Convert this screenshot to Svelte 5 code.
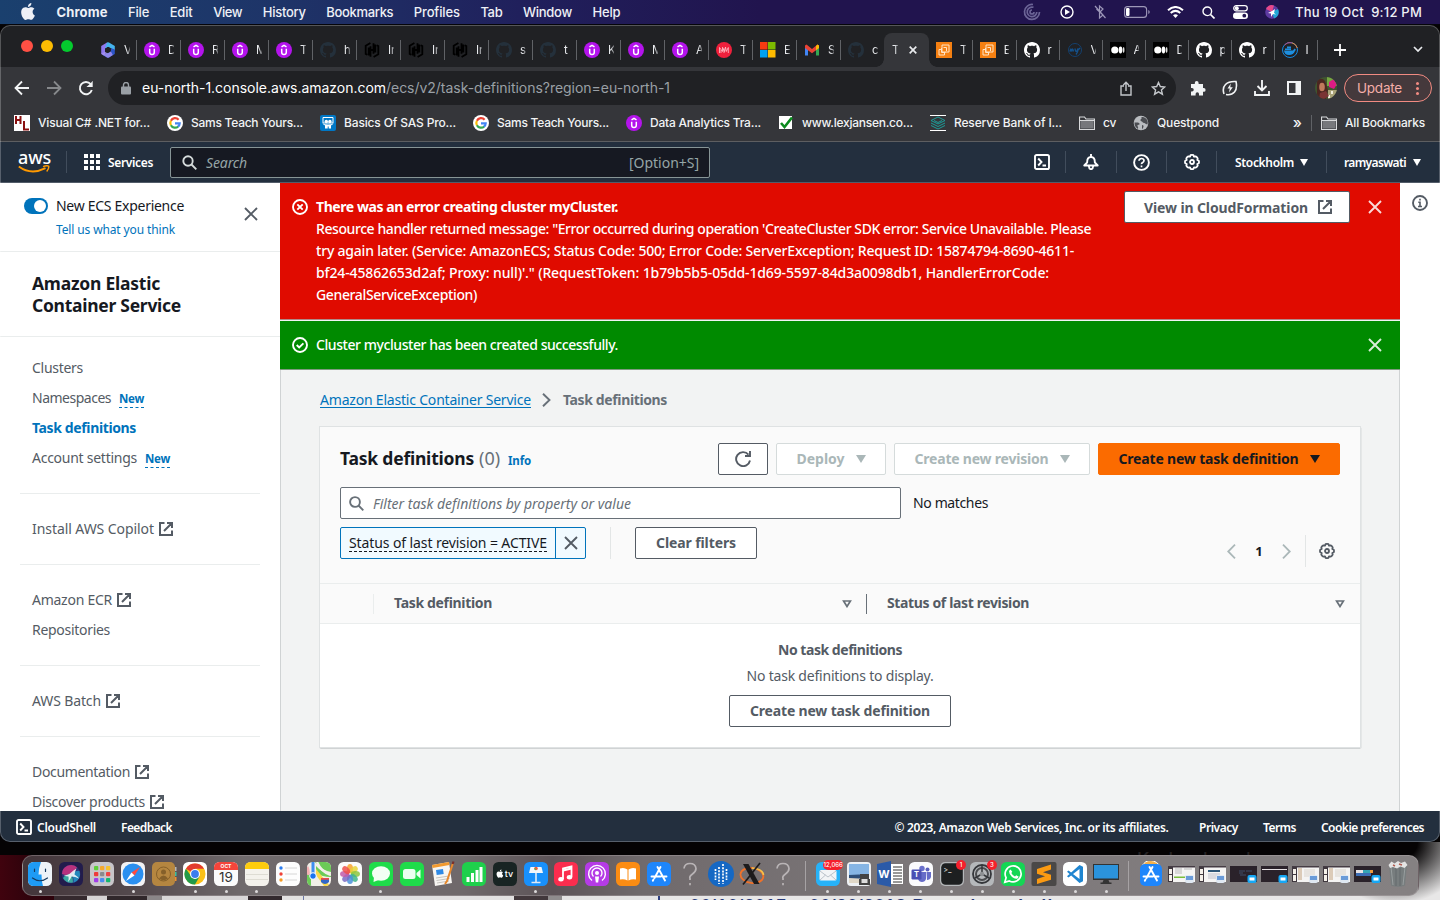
<script>
  // Spreads a label over the given width by adjusting its tracking.
  function fit(node, width) {
    const chars = node.textContent.length;
    const natural = node.getBoundingClientRect().width;
    node.style.letterSpacing = `${(width - natural) / chars}px`;
  }

  const menus = [
    ['File', 21], ['Edit', 23], ['View', 29], ['History', 43], ['Bookmarks', 67],
    ['Profiles', 46], ['Tab', 22], ['Window', 49], ['Help', 28]
  ];

  const tabsBefore = [
    ['office', 'V'], ['udemy', 'D'], ['udemy', 'R'], ['udemy', 'M'], ['udemy', 'T'],
    ['githubDark', 'h'], ['hashi', 'In'], ['hashi', 'In'], ['hashi', 'In'],
    ['githubDark', 's'], ['githubDark', 't'], ['udemy', 'K'], ['udemy', 'M'], ['udemy', 'A'],
    ['mred', 'T'], ['microsoft', 'E'], ['gmail', 'S'], ['githubDark', 'c']
  ];
  const tabsAfter = [
    ['ec2', 'T'], ['ec2', 'E'], ['github', 'r'], ['mysql', 'V'], ['medium', 'A'],
    ['medium', 'D'], ['github', 'p'], ['github', 'r'], ['docker', 'I']
  ];

  const bookmarks = [
    ['hl', 'Visual C# .NET for...', 112], ['google', 'Sams Teach Yours...', 112],
    ['slideshare', 'Basics Of SAS Pro...', 112], ['google', 'Sams Teach Yours...', 112],
    ['udemy', 'Data Analytics Tra...', 111], ['check', 'www.lexjansen.co...', 111],
    ['layers', 'Reserve Bank of I...', 108], ['folder', 'cv', 13], ['globe', 'Questpond', 62]
  ];

  const sections = [
    [
      { t: 'Clusters', w: 51 },
      { t: 'Namespaces', w: 79, isNew: true },
      { t: 'Task definitions', w: 104, active: true },
      { t: 'Account settings', w: 105, isNew: true }
    ],
    [{ t: 'Install AWS Copilot', w: 122, ext: true }],
    [{ t: 'Amazon ECR', w: 80, ext: true }, { t: 'Repositories', w: 78 }],
    [{ t: 'AWS Batch', w: 69, ext: true }],
    [{ t: 'Documentation', w: 98, ext: true }, { t: 'Discover products', w: 113, ext: true }]
  ];

  const errorLines = [
    ["Resource handler returned message: \"Error occurred during operation 'CreateCluster SDK error: Service Unavailable. Please", 775],
    ['try again later. (Service: AmazonECS; Status Code: 500; Error Code: ServerException; Request ID: 15874794-8690-4611-', 758],
    ["bf24-45862653d2af; Proxy: null)'.\" (RequestToken: 1b79b5b5-05dd-1d69-5597-84d3a0098db1, HandlerErrorCode:", 733],
    ['GeneralServiceException)', 161]
  ];

  const dock = [
    ['finder', 1], ['siri'], ['launchpad'], ['safari', 1], ['contacts'], ['chrome', 1],
    ['calendar', 1], ['notes', 1], ['reminders'], ['maps'], ['photos'], ['messages', 1],
    ['facetime'], ['pages'], ['numbers'], ['tv'], ['keynote', 1], ['music'], ['podcasts'],
    ['books'], ['appstore'], ['unknown'], ['dots'], ['xquartz'], ['unknown'], ['sep'],
    ['mail', 1], ['preview', 1], ['word', 1], ['teams', 1], ['terminal', 1], ['settings', 1],
    ['whatsapp', 1], ['sublime', 1], ['vscode', 1], ['monitor', 1], ['sep'], ['appstore2'],
    ['win1'], ['win2'], ['win3'], ['win4'], ['win5'], ['win6'], ['win7'], ['trash']
  ];
  const petals = ['#f7a32b', '#e8d33a', '#8cc63e', '#3fb58a', '#4a90d9', '#7b6bc4', '#c25ba8', '#ee4f4a'];
  const gridColors = ['#5fcf3a', '#f5a82e', '#f5c22e', '#ee3a3a', '#8a8a8e', '#ee4444', '#a23be8', '#4a8df0', '#15b86e'];
  const gh = 'M8 0C3.58 0 0 3.58 0 8c0 3.54 2.29 6.53 5.47 7.59.4.07.55-.17.55-.38 0-.19-.01-.82-.01-1.49-2.01.37-2.53-.49-2.69-.94-.09-.23-.48-.94-.82-1.13-.28-.15-.68-.52-.01-.53.63-.01 1.08.58 1.23.82.72 1.21 1.87.87 2.33.66.07-.52.28-.87.51-1.07-1.78-.2-3.64-.89-3.64-3.95 0-.87.31-1.59.82-2.15-.08-.2-.36-1.02.08-2.12 0 0 .67-.21 2.2.82.64-.18 1.32-.27 2-.27s1.36.09 2 .27c1.53-1.04 2.2-.82 2.2-.82.44 1.1.16 1.92.08 2.12.51.56.82 1.27.82 2.15 0 3.07-1.87 3.75-3.65 3.95.29.25.54.73.54 1.48 0 1.07-.01 1.93-.01 2.2 0 .21.15.46.55.38A8.01 8.01 0 0 0 16 8c0-4.42-3.58-8-8-8z';
  const apple = 'M12.152 6.896c-.948 0-2.415-1.078-3.96-1.04-2.04.027-3.91 1.183-4.961 3.014-2.117 3.675-.546 9.103 1.519 12.09 1.013 1.454 2.208 3.09 3.792 3.039 1.52-.065 2.09-.987 3.935-.987 1.831 0 2.35.987 3.96.948 1.637-.026 2.676-1.48 3.676-2.948 1.156-1.688 1.636-3.325 1.662-3.415-.039-.013-3.182-1.221-3.22-4.857-.026-3.04 2.48-4.494 2.597-4.559-1.429-2.09-3.623-2.324-4.39-2.376-2-.156-3.675 1.09-4.61 1.09zM15.53 3.83c.843-1.012 1.4-2.427 1.245-3.83-1.207.052-2.662.805-3.532 1.818-.78.896-1.454 2.338-1.273 3.714 1.338.104 2.715-.688 3.559-1.701';
</script>

{#snippet ext()}
  <svg class="ext" width="14" height="14" viewBox="0 0 14 14" fill="none" stroke="currentColor" stroke-width="2"><path d="M5.500 1H1v12h12V8.500M8 1h5v5M13 1L5 9" /></svg>
{/snippet}

{#snippet close(size)}
  <svg width={size} height={size} viewBox="0 0 14 14" fill="none" stroke="currentColor" stroke-width="1.900"><path d="M1 1l12 12M13 1L1 13" /></svg>
{/snippet}

{#snippet gear()}
  <svg width="16" height="16" viewBox="0 0 16 16" fill="none" stroke="currentColor" stroke-width="1.800"><path stroke-linejoin="round" d="M6.600 1.200Q8 .6 9.400 1.200L10 2.600l1.600-.3q1.400.8 2.100 2.100L13.300 6l1.500.7q.4 1.300 0 2.600l-1.500.7.4 1.600q-.7 1.400-2.100 2.100l-1.600-.3-.6 1.400q-1.400.6-2.800 0L6 13.400l-1.600.3q-1.400-.7-2.100-2.100l.4-1.600-1.500-.7q-.4-1.300 0-2.600L2.700 6l-.4-1.600q.7-1.300 2.100-2.100L6 2.600z" /><circle cx="8" cy="8" r="2" /></svg>
{/snippet}

{#snippet shell()}
  <svg width="16" height="16" viewBox="0 0 16 16" fill="none" stroke="currentColor" stroke-width="1.900"><rect x="1" y="1" width="14" height="14" rx="1.600" /><path d="M4.200 4.500L7.500 8l-3.300 3.500M8.500 11.500h3.500" /></svg>
{/snippet}

{#snippet caret()}
  <svg width="10" height="8" viewBox="0 0 10 8" fill="currentColor"><path d="M0 0h10L5 8z" /></svg>
{/snippet}

{#snippet fav(name)}
  <svg class="fav" width="16" height="16" viewBox="0 0 16 16">
    {#if name === 'office'}
      <path d="M7 .6L1.200 4v8L5 14.200V6.500l5-3z" fill="#8f78ee" /><path d="M7 .6q1-.6 2 0L14.800 4v4.500L10.500 6 8 4.700l-3 1.800z" fill="#45b4ee" /><path d="M14.800 7.500V12L9 15.400q-1 .6-2 0l-3.800-2.200L10.800 9V6z" fill="#2d55c8" /><path d="M1.200 11.800L5 9.700l2.500 1.600 3.300-2 2 3.800L9 15.400q-1 .6-2 0z" fill="#a893f4" opacity=".8" /><path d="M5.300 6.500L8 5l2.700 1.500v3L8 11 5.300 9.500z" fill="#202124" />
    {:else if name === 'udemy'}
      <circle cx="8" cy="8" r="8" fill="#b413ec" /><path d="M5.500 4.800L8 3.300l2.500 1.500M5.700 6.800v3.400a2.300 2.300 0 0 0 4.600 0V6.800" fill="none" stroke="#fff" stroke-width="1.500" />
    {:else if name === 'github'}
      <path d={gh} fill="#fff" />
    {:else if name === 'githubDark'}
      <path d={gh} fill="#24303b" />
    {:else if name === 'hashi'}
      <g fill="none" stroke="#000" stroke-width="1.800"><path d="M6.400 1L1.700 3.700v8.200l1.600.9M4.700 13.500V5.400M6.500 4.200v10.600M6.500 8h3M9.500 1.200v10.600M11.300 2.500v8.100M9.600 15l4.700-2.700V4.100l-1.600-.9" /></g>
    {:else if name === 'mred'}
      <circle cx="8" cy="8" r="8" fill="#f0203c" /><path d="M3.500 11V5.500l3 4V5.300l2 4.200 1-4.500.8 4.500 2-4V11M5 11V8M8 11V6.500" fill="none" stroke="#ffc5cb" stroke-width=".8" />
    {:else if name === 'microsoft'}
      <path d="M0 0h7.500v7.500H0z" fill="#f53a11" /><path d="M8 0h7.500v7.500H8z" fill="#7cbb00" /><path d="M0 8h7.500v7.500H0z" fill="#00a1f1" /><path d="M8 8h7.500v7.500H8z" fill="#ffbb00" />
    {:else if name === 'gmail'}
      <path d="M1 4.500V13.500h3V7z" fill="#4285f4" /><path d="M12 7v6.500h3V4.500z" fill="#34a853" /><path d="M1 3.500l1.500-1L8 7l5.500-4.500 1.500 1V6l-7 5.200L1 6z" fill="#ea4335" /><path d="M12 4l1.500-1.500L15 3.500V6l-3 2.200z" fill="#fbbc04" />
    {:else if name === 'ec2'}
      <path d="M0 0h16v16H0z" fill="#f58012" /><path d="M6 3h7v7H6z" fill="none" stroke="#ffe3c4" /><path d="M7.500 5.500h3V9M8.500 10.500v2.500H3V7.500h2.500M5.500 6v4.500h4" fill="none" stroke="#ffe3c4" />
    {:else if name === 'mysql'}
      <circle cx="8" cy="8" r="6.500" fill="none" stroke="#14406e" stroke-width="1" /><path d="M3 9.500q1-5 1.500 0 1-5 2 0M8 6.500q.5 4 2 2.500l1-2.500q0 4-2 6M11 8l2-2" fill="none" stroke="#14508a" stroke-width="1.400" />
    {:else if name === 'medium'}
      <path d="M0 0h16v16H0z" fill="#000" /><circle cx="4.800" cy="8" r="3.600" fill="#fff" /><ellipse cx="10.500" cy="8" rx="1.800" ry="3.400" fill="#fff" /><ellipse cx="13.600" cy="8" rx=".9" ry="3.100" fill="#ddd" />
    {:else if name === 'docker'}
      <circle cx="8" cy="8" r="7.500" fill="none" stroke="#1789e0" stroke-width="1" /><path d="M2.500 3A7.500 7.500 0 0 1 10 .8" fill="none" stroke="#c04a78" /><path d="M10 .8A7.500 7.500 0 0 1 15.300 6" fill="none" stroke="#f0883c" /><path d="M2 8.500h9l1.500-2 1.500 1.200-1 1.300q-1.500 4-6 4T2 8.500zM3 6.500h6v1.600H3zM5 4.600h4v1.600H5z" fill="#1d8fe0" />
    {:else if name === 'hl'}
      <path d="M0 0h16v16H0z" fill="#fff" /><path d="M2 1v8M6.500 1v8M2 5h4.500M10 6v8.500h5" fill="none" stroke="#8b1010" stroke-width="2" />
    {:else if name === 'google'}
      <circle cx="8" cy="8" r="8" fill="#fff" /><g fill="none" stroke-width="2.200"><path d="M11.600 4.700A4.700 4.700 0 0 0 3.900 5.800" stroke="#ea4335" /><path d="M3.900 5.700a4.800 4.800 0 0 0 0 4.600" stroke="#fbbc05" /><path d="M3.900 10.200a4.700 4.700 0 0 0 7.300 1.300" stroke="#34a853" /><path d="M11 11.700A4.500 4.500 0 0 0 12.700 8.300H8" stroke="#4285f4" /></g>
    {:else if name === 'slideshare'}
      <rect width="16" height="16" rx="2" fill="#0077c5" /><path d="M3 2.500h10v5.500H3z" fill="none" stroke="#fff" /><circle cx="6.300" cy="6.500" r="1.700" fill="#fff" /><circle cx="9.900" cy="6.500" r="1.700" fill="#fff" /><path d="M2 8.500q6 2 12 0l-3 2v3H8.700v-2h-1v2H5v-3z" fill="#fff" />
    {:else if name === 'check'}
      <path d="M1 1h13v13H1z" fill="#fff" /><path d="M3 8l3.500 4L14 2.500" fill="none" stroke="#0b8a1e" stroke-width="2.600" />
    {:else if name === 'layers'}
      <path d="M0 .5h16M0 15.500h16" stroke="#fff" /><g fill="none" stroke="#1d9c98" stroke-width="1"><path d="M1 5.500L8 2l7 3.500L8 9z" /><path d="M1 8l7 3.500L15 8M1 10.500L8 14l7-3.500M4 5.500l4 2 4-2" /></g>
    {:else if name === 'folder'}
      <path d="M.5 2h5l1.500 2h8.500v10.500H.5z" fill="#35363a" stroke="#d8d9db" stroke-width="1.200" /><path d="M1.500 6h13v7.500h-13z" fill="#77787c" /><path d="M.5 5.500h15" stroke="#d8d9db" />
    {:else if name === 'globe'}
      <circle cx="8" cy="8" r="7.300" fill="#b9bcc0" /><path d="M1.500 7.500q2 .2 3.500 0 2 .5 1.500 2-2.500 0-2 1.500 1 1.500.5 3-3.500-2-3.500-6.500zM8.500 2Q9 4 7.500 4.500q-.5 2 1.500 2 1 1.500 2.500 1.500 1.500 1 2.800 1.500.8-2 .1-4-2-4-5.900-3.500zM9 10q2 0 1.500 2L9 14.500z" fill="#4b4d52" />
    {/if}
  </svg>
{/snippet}

{#snippet tab(t)}
  <div class="tab">{@render fav(t[0])}<span class="tab-label">{t[1]}</span></div>
{/snippet}

{#snippet miniBadge(kind)}
  {#if kind === 'p'}
    <rect x="17" y="13" width="9" height="8" rx="2" fill="#dfe8f2" /><path d="M18 14h7v4h-7z" fill="#6a9bd8" />
  {:else}
    <rect x="17.500" y="13" width="9" height="8" rx="2" fill="#16a8f5" /><path d="M19.500 15.500h5v3h-5z" fill="#fff" />
  {/if}
{/snippet}

{#snippet app(name)}
  {#if name.startsWith('win')}
    {@const n = +name[3]}
    <svg width="27" height="24" viewBox="0 0 27 24">
      {#if n === 1 || n === 2 || n === 5 || n === 6}
        <path d="M0 4h27v16H0z" fill="#f5f4f3" /><path d="M0 4h27v1.500H0z" fill="#453c44" /><path d="M0 5h5v15H0z" fill="#40383f" /><path d="M1 7h3v5H1zM1 13h3v6H1z" fill="#f5f1ea" />
        {#if n === 1}<path d="M6 14.500h19v1.500H6z" fill="#79bd3c" /><path d="M7 7h7M7 9h7M16 7h8M7 11h7" stroke="#bbb" />{/if}
        {#if n === 2}<path d="M9 8h12v2H9z" fill="#2f5778" /><path d="M9 12h12M9 14h12M9 16h8" stroke="#aab" stroke-width=".7" />{/if}
        {#if n >= 5}<path d="M6 6h4v12H6z" fill="#dccbb8" /><path d="M12 8h11M12 10h11M12 12h11M12 14h8" stroke="#d0c6bb" stroke-width=".7" />{/if}
        {@render miniBadge('p')}
      {:else}
        <path d="M0 4h27v16H0z" fill="#2a222a" />
        {#if n === 3}<path d="M9 9h6M9 11h4M10 13h6M16 9h6" stroke="#3f4c66" />{/if}
        {#if n === 4}<path d="M1 7.500h25" stroke="#e8e3e6" stroke-width="1" />{/if}
        {#if n === 7}<path d="M2 8h7v3H2z" fill="#e8e3e6" /><path d="M9 8h9v3H9z" fill="#36a5b5" /><path d="M16 8h3v3h-3z" fill="#ee9a3c" /><path d="M2 11h15v3H2z" fill="#3d6db4" />{/if}
        {@render miniBadge('m')}
      {/if}
    </svg>
  {:else}
    <svg width="26" height="26" viewBox="-1 -1 26 26">
      {#if name === 'finder'}
        <rect width="24" height="24" rx="5.500" fill="#eef3f8" /><path d="M5.500 0H13q-2.500 6-2.500 12.500h3q0 7 1.500 11.500H5.500A5.500 5.500 0 0 1 0 18.500v-13A5.500 5.500 0 0 1 5.500 0z" fill="#1e9bf5" /><path d="M6.500 7v2.500M17.500 7v2.500M4.500 16q7.500 5.500 15 0" fill="none" stroke="#173a5e" stroke-width="1.200" stroke-linecap="round" />
      {:else if name === 'siri'}
        <rect width="24" height="24" rx="5.500" fill="#221c4c" /><circle cx="12" cy="12" r="9.300" fill="#2c2f72" /><path d="M3 12a9 9 0 0 1 15-6.700Q16 10 12 12T3 12z" fill="#b8327e" /><path d="M12 12q5-4 8.500-3a9 9 0 0 1-6 11.800Q15 15 12 12z" fill="#2487bb" /><path d="M12 12q-5 0-8 4a9 9 0 0 0 10 4.500Q14 15 12 12z" fill="#3aa8a0" /><path d="M4.500 13.500q5-.5 7-2.500 3-3 6-4.500-2 4-2 6 3 2 4.500 4-4-2-7.500-2-1 3-3.500 5.500 1-4 .5-5.500-2 0-5-1z" fill="#fff" opacity=".85" />
      {:else if name === 'launchpad'}
        <rect width="24" height="24" rx="5.500" fill="#c8c6ca" />{#each gridColors as c, i}<rect x={4 + (i % 3) * 6} y={4 + Math.floor(i / 3) * 6} width="4.300" height="4.300" rx="1" fill={c} />{/each}
      {:else if name === 'safari'}
        <rect width="24" height="24" rx="5.500" fill="#f2f2f4" /><circle cx="12" cy="12" r="10.500" fill="#2a8ff0" /><path d="M19 5l-5.500 8.500-3-3z" fill="#ff4b3e" /><path d="M5 19l5.500-8.500 3 3z" fill="#fff" />
      {:else if name === 'contacts'}
        <rect width="23" height="24" rx="5" fill="#b58640" /><path d="M23 5h1.500v4H23z" fill="#b5b5b5" /><path d="M23 10h1.500v4H23z" fill="#3bc0a0" /><path d="M23 15h1.500v4H23z" fill="#f09030" /><circle cx="11.500" cy="12" r="7" fill="none" stroke="#85602a" /><circle cx="11.500" cy="10" r="2.500" fill="#85602a" /><path d="M7 16.500q4.500-6 9 0-4.500 3.500-9 0z" fill="#85602a" />
      {:else if name === 'chrome'}
        <rect width="24" height="24" rx="5.500" fill="#fff" /><circle cx="12" cy="12" r="10.500" fill="#fbc116" /><path d="M12 12L2.900 6.700A10.500 10.500 0 0 1 21.100 6.700H12z" fill="#e33b2e" /><path d="M2.900 6.700A10.500 10.500 0 0 0 12 22.500l4.600-8L12 12l-4 2z" fill="#229a48" /><circle cx="12" cy="12" r="5" fill="#fff" /><circle cx="12" cy="12" r="3.900" fill="#3b7ded" />
      {:else if name === 'calendar'}
        <rect width="24" height="24" rx="5.500" fill="#fbfbfb" /><path d="M0 8V5.500A5.500 5.500 0 0 1 5.500 0h13A5.500 5.500 0 0 1 24 5.500V8z" fill="#f4453b" /><text x="12" y="6" text-anchor="middle" font-size="5" font-weight="700" fill="#fff">OCT</text><text x="12" y="19.700" text-anchor="middle" font-size="13.500" fill="#333">19</text>
      {:else if name === 'notes'}
        <rect width="24" height="24" rx="5.500" fill="#f4f2ec" /><path d="M0 7V5.500A5.500 5.500 0 0 1 5.500 0h13A5.500 5.500 0 0 1 24 5.500V7z" fill="#fdcc0e" /><path d="M1 12.500h22M1 17.500h22" stroke="#d8d5cd" stroke-width=".8" />
      {:else if name === 'reminders'}
        <rect width="24" height="24" rx="5.500" fill="#fdfdfd" /><circle cx="5" cy="6" r="1.700" fill="#2c7df0" /><circle cx="5" cy="12" r="1.700" fill="#ef4136" /><circle cx="5" cy="18" r="1.700" fill="#f59a23" /><path d="M9 6h12M9 12h12M9 18h12" stroke="#ccc" stroke-width=".8" />
      {:else if name === 'maps'}
        <clipPath id="mapclip"><rect width="24" height="24" rx="5.500" /></clipPath>
        <g clip-path="url(#mapclip)"><path d="M0 0h24v24H0z" fill="#f2efe8" /><path d="M8 0h16v10Q14 8 8 0z" fill="#6ccb57" /><path d="M0 12h4v12H0zM9 11q6 4 15 4v-3Q14 10 9 4z" fill="#6ccb57" /><path d="M10 0q4 10 14 13" fill="none" stroke="#f2efe8" stroke-width="2.500" /><path d="M9 7l14 17h-6L9 13z" fill="#fbd84a" /><path d="M0 5q2 4 1 8" stroke="#f5b0b4" stroke-width="3" fill="none" /><path d="M6 0v14" stroke="#3e8ef0" stroke-width="3" /><circle cx="6" cy="14" r="3.300" fill="#1c74f0" stroke="#fff" /><path d="M14 17h8v3q-4 4-8 0z" fill="#3267c8" /><path d="M14 16h8v1.800h-8z" fill="#e94b4b" /></g>
      {:else if name === 'photos'}
        <rect width="24" height="24" rx="5.500" fill="#fbfbfb" />{#each petals as c, i}<ellipse cx="12" cy="6.600" rx="3" ry="4.600" fill={c} opacity=".85" transform="rotate({i * 45} 12 12)" />{/each}
      {:else if name === 'messages'}
        <rect width="24" height="24" rx="5.500" fill="#1fdc4a" /><ellipse cx="12" cy="11.500" rx="9" ry="7.300" fill="#f2fff4" /><path d="M5 15l-.5 5 5-2z" fill="#f2fff4" />
      {:else if name === 'facetime'}
        <rect width="24" height="24" rx="5.500" fill="#1fdc4a" /><rect x="3" y="7" width="12.500" height="10" rx="2.500" fill="#eafff0" /><path d="M16.500 11l4-3.500v9l-4-3.500z" fill="#eafff0" />
      {:else if name === 'pages'}
        <path d="M1 3l17-3 3 21-17 3z" fill="#f8f6f2" /><path d="M1 3l17-3 .5 3-17 3z" fill="#f29a2e" /><path d="M5 8l7-1 .7 5-7 1z" fill="#2f8ae6" /><path d="M5 16l13-2M5.500 18.500l13-2M6 21l12-2" stroke="#b9b6b0" stroke-width=".8" /><path d="M22 1l-6 18-2 3" fill="none" stroke="#e8892c" stroke-width="2" /><path d="M22.500 -.5l-.8 2.500" stroke="#7a2e2a" stroke-width="2.200" />
      {:else if name === 'numbers'}
        <rect width="24" height="24" rx="5.500" fill="#1fd04c" /><path d="M6 20v-5M10.500 20v-9M15 20V8M19 20V5" stroke="#fff" stroke-width="3" />
      {:else if name === 'tv'}
        <rect width="24" height="24" rx="5.500" fill="#182423" /><path d={apple} fill="#fff" transform="translate(2.800 7.500) scale(.34)" /><text x="16" y="15.300" text-anchor="middle" font-size="9" font-weight="500" fill="#fff">tv</text>
      {:else if name === 'keynote'}
        <rect width="24" height="24" rx="5.500" fill="#1890fb" /><path d="M6.500 5h11l1.500 6H5z" fill="#f2f6fb" /><path d="M12 11v9M7.500 20.500h9" stroke="#dfeaf7" stroke-width="1.600" /><circle cx="12" cy="6.500" r="1.800" fill="#ee5a3c" /><path d="M12 6.500V8.300a1.800 1.800 0 0 1-1.800-1.800z" fill="#4cc04c" />
      {:else if name === 'music'}
        <rect width="24" height="24" rx="5.500" fill="#fb2d4e" /><path d="M9 17V6.500l8.500-2v10.500" fill="none" stroke="#fff" stroke-width="1.800" /><path d="M9 8.500l8.500-2" stroke="#fff" stroke-width="2" /><ellipse cx="7" cy="17.300" rx="2.700" ry="2.200" fill="#fff" /><ellipse cx="15.500" cy="15.300" rx="2.700" ry="2.200" fill="#fff" />
      {:else if name === 'podcasts'}
        <rect width="24" height="24" rx="5.500" fill="#b53be6" /><g fill="none" stroke="#fff" stroke-width="1.400"><path d="M7 18.500a8.400 8.400 0 1 1 10 0" /><path d="M8.500 14.500a5 5 0 1 1 7 0" /></g><circle cx="12" cy="11" r="2" fill="#fff" /><path d="M10 14.500h4l-.8 6h-2.400z" fill="#fff" />
      {:else if name === 'books'}
        <rect width="24" height="24" rx="5.500" fill="#fb8c13" /><path d="M4 6.500q4-1.500 7.500 1v11q-3.500-2-7.500-1zM20 6.500q-4-1.500-7.500 1v11q3.500-2 7.500-1z" fill="#fff" />
      {:else if name === 'appstore' || name === 'appstore2'}
        {#if name === 'appstore2'}<path d="M2.500 5Q6-2 12-1.500T21.500 5z" fill="#f3b04c" stroke="#fff" /><rect x="1" y="2" width="22" height="22" rx="5" fill="#1e86fb" />{:else}<rect width="24" height="24" rx="5.500" fill="#1e86fb" />{/if}
        <path d="M13.500 5L7.500 16M10.500 5l7.500 13.500M4.500 14.500h9.500M17 14.500h2.500M6.500 17.500l-.7 1.200" stroke="#fff" stroke-width="1.900" stroke-linecap="round" />
      {:else if name === 'unknown'}
        <path d="M6 6.500Q6.500 1.500 12 1.500t6 5q0 3-3.500 5.500T12 16.500v1.500M12 21v2.200" fill="none" stroke="#b9b4b6" stroke-width="1.700" />
      {:else if name === 'dots'}
        <circle cx="12" cy="12" r="13" fill="#1568c4" /><path d="M6.500 7v11M10 5v17M14 2v20M17.500 7v11" stroke="#fff" stroke-width="1.700" stroke-dasharray="2 1.200" />
      {:else if name === 'xquartz'}
        <ellipse cx="12" cy="13.500" rx="11.500" ry="7.500" fill="none" stroke="#f0722a" stroke-width="1.800" transform="rotate(8 12 13)" /><path d="M12 6q11 1 11.500 7" fill="none" stroke="#f5c24b" stroke-width="1.600" /><path d="M3 2h5.500l11 20H14z" fill="#1d1b1c" /><path d="M20 1L3 22.500" stroke="#1d1b1c" stroke-width="1.700" />
      {:else if name === 'mail'}
        <rect width="24" height="24" rx="5.500" fill="#26b2f8" /><rect x="3.500" y="8" width="17" height="10.500" rx="1.500" fill="#f2f4f6" /><path d="M4 9l8 6 8-6M4 18l5.500-5M20 18l-5.500-5" fill="none" stroke="#b4bcc5" stroke-width=".9" />
      {:else if name === 'preview'}
        <rect width="24" height="24" rx="4" fill="#eef1f4" /><path d="M2 2h20v19H2z" fill="#86b5e4" /><path d="M2 13q10-1 20 0v8H2z" fill="#2f4f78" /><path d="M2 16l20 1v4H2z" fill="#e0d8c8" /><path d="M13 12h9v5h1v6H12v-6h1z" fill="#444" /><path d="M14.500 17h6v4h-6z" fill="#ddd" />
      {:else if name === 'word'}
        <path d="M11 2h15v20H11z" fill="#fff" /><path d="M15 5h9M15 8h9M15 11h9M15 14h9M15 17h9M15 20h9" stroke="#333" stroke-width="1" /><path d="M-1 2l14-3v26l-14-3z" fill="#2a5aa8" /><text x="6" y="16" text-anchor="middle" font-size="11" font-weight="700" fill="#fff">W</text>
      {:else if name === 'teams'}
        <rect width="24" height="24" rx="5.500" fill="#fbfbfd" /><circle cx="13" cy="6.500" r="2.700" fill="#6a70cc" /><circle cx="18.500" cy="7.500" r="2" fill="#5a60bc" /><path d="M9 10h8v7q-1 3-4 3t-4-3zM17.500 10H22v5q-1 3-4 3z" fill="#666cc8" /><rect x="2.500" y="7.500" width="10" height="10" rx="1.200" fill="#4b50b4" /><text x="7.500" y="15" text-anchor="middle" font-size="7.500" font-weight="700" fill="#fff">T</text>
      {:else if name === 'terminal'}
        <rect width="24" height="24" rx="5" fill="#b4b7b9" /><rect x="1.200" y="1.200" width="21.600" height="21.600" rx="4.300" fill="#1d1f20" /><text x="3.500" y="9.500" font-size="7" fill="#fff">&gt;_</text>
      {:else if name === 'settings'}
        <rect width="24" height="24" rx="5.500" fill="#b5b8bb" /><circle cx="12" cy="12" r="9" fill="none" stroke="#34363a" stroke-width="1.800" /><circle cx="12" cy="12" r="6" fill="none" stroke="#4b4d50" stroke-width="2" /><path d="M12 12V4M12 12l7 4M12 12l-7 4" stroke="#34363a" stroke-width="1.500" /><circle cx="12" cy="12" r="2.200" fill="#8d9093" />
      {:else if name === 'whatsapp'}
        <rect width="24" height="24" rx="5.500" fill="#14d654" /><path d="M3.800 20.200l1.300-4.500a8 8 0 1 1 3.200 3.200z" fill="none" stroke="#fff" stroke-width="1.700" /><path d="M9.500 7.500L8 9q0 3.500 3 6t5.500 1.500l1.300-1.800-2.600-1.500-1.200 1.200Q11.500 13.500 10.300 11l1-1.200z" fill="#fff" />
      {:else if name === 'sublime'}
        <rect x="-.5" width="25" height="24" rx="2" fill="#4a4847" /><path d="M5 7l14-4.500v5l-8 2.700 8 2.500v5L5 22v-5l8-2.700-8-2.500z" fill="#fb9a12" />
      {:else if name === 'vscode'}
        <rect width="24" height="24" rx="5.500" fill="#fff" /><path d="M16.500 3L20 4.700v14.600L16.500 21 4 9.800l1.500-1.400 11 8.600V7L5.500 15.600 4 14.200z" fill="#1f85d0" />
      {:else if name === 'monitor'}
        <path d="M-1 2h26v16H-1z" fill="#333" /><path d="M0 3h24v13.500H0z" fill="#2b93dc" /><path d="M9.500 18h5l1 2.500h2V22h-11v-1.500h2z" fill="#333" />
      {:else if name === 'trash'}
        <path d="M3 2h18l-2 21.500q-7 2.500-14 0z" fill="#777d7e" /><path d="M5 5l2 18M19 5l-2 18" stroke="#989e9f" /><path d="M10 6v18M14 6v18" stroke="#656b6c" /><path d="M2.500 3l3-3.500 3 2L12-1l3 2 4-1.500L21.500 3l-3 3-4-1.500L11 6.500 7 5 4 6z" fill="#e4e4e4" /><path d="M7 3l2 1M13 2l3 1" stroke="#b25c50" stroke-width="1.500" />
      {/if}
    </svg>
    {#if name === 'mail'}<b class="badge wide">12,066</b>{/if}
    {#if name === 'terminal'}<b class="badge">1</b>{/if}
    {#if name === 'settings'}<b class="badge">3</b>{/if}
  {/if}
{/snippet}

<div class="desktop">
  <header class="menubar">
    <svg class="apple" width="14" height="17" viewBox="2 0 20 24"><path d={apple} fill="#eef0f6" /></svg>
    <b use:fit={51}>Chrome</b>
    {#each menus as m}<span use:fit={m[1]}>{m[0]}</span>{/each}
    <div class="status">
      <svg width="18" height="18" viewBox="0 0 18 18" fill="none" stroke="#6b6496" stroke-width="1.700"><path d="M10 1.500A7.500 7.500 0 1 0 16.500 9M10.500 4.300A4.800 4.800 0 1 0 13.800 9M9 7a2 2 0 1 0 2 2" /></svg>
      <svg width="14" height="14" viewBox="0 0 14 14"><circle cx="7" cy="7" r="6" fill="none" stroke="#fff" stroke-width="1.400" /><path d="M5 4l5 3-5 3z" fill="#fff" /></svg>
      <svg width="12" height="14" viewBox="0 0 12 14" fill="none" stroke="#9c96b8" stroke-width="1.200"><path d="M2.500 4l6.500 6-3.500 3V1L9 4 6.500 6.500M1 1l10.500 12" /></svg>
      <svg width="26" height="12" viewBox="0 0 26 12"><rect x=".6" y=".6" width="22" height="10.800" rx="3" fill="none" stroke="#9e98b8" stroke-width="1.100" /><path d="M24.300 4v4q1.400-.5 1.400-2t-1.400-2z" fill="#9e98b8" /><rect x="2" y="2" width="3.500" height="8" rx="1.200" fill="#fff" /></svg>
      <svg width="17" height="12" viewBox="0 0 17 12" fill="none" stroke="#fff" stroke-width="2"><path d="M1 4.200q7.500-6.400 15 0M3.700 7q4.800-4.200 9.600 0" /><path d="M8.500 12L6 9.300q2.500-2 5 0z" fill="#fff" stroke="none" /></svg>
      <svg width="13" height="13" viewBox="0 0 13 13" fill="none" stroke="#fff" stroke-width="1.400"><circle cx="5.300" cy="5.300" r="4.300" /><path d="M8.500 8.500l4 4" stroke-width="1.700" /></svg>
      <svg width="15" height="14" viewBox="0 0 15 14"><rect x=".7" y=".7" width="13.600" height="5.200" rx="2.600" fill="none" stroke="#fff" stroke-width="1.200" /><circle cx="3.800" cy="3.300" r="2" fill="#fff" /><rect y="7.500" width="15" height="6.500" rx="3.200" fill="#fff" /><circle cx="11.300" cy="10.700" r="1.900" fill="#21154e" /></svg>
      <svg width="14" height="14" viewBox="0 0 14 14"><circle cx="7" cy="7" r="6.800" fill="#5e3ba2" /><path d="M7 7L1 4a6.800 6.800 0 0 1 8-3.500z" fill="#e8488a" /><path d="M7 7l6-3a6.800 6.800 0 0 1-4 9.500z" fill="#21a7d6" /><path d="M3 8l4-2 3-2-1 4 2 1.500-3-.5-2 3 0-3.500z" fill="#fff" /></svg>
      <span class="clock" use:fit={127}>Thu 19 Oct&nbsp; 9:12 PM</span>
    </div>
  </header>

  <div class="window">
    <div class="tabs">
      <div class="lights"><i></i><i></i><i></i></div>
      {#each tabsBefore as t}{@render tab(t)}{/each}
      <div class="active-tab"><span class="tab-label">T</span><svg width="8" height="8" viewBox="0 0 8 8"><path d="M.7.7l6.600 6.600M7.300.7L.7 7.300" stroke="#e8eaed" stroke-width="1.700" /></svg></div>
      <div class="tabs late">{#each tabsAfter as t}{@render tab(t)}{/each}</div>
      <svg class="plus" width="12" height="12" viewBox="0 0 12 12"><path d="M6 0v12M0 6h12" stroke="#fff" stroke-width="1.800" /></svg>
      <svg class="chev" width="10" height="7" viewBox="0 0 10 7"><path d="M1 1l4 4 4-4" fill="none" stroke="#e8eaed" stroke-width="1.700" /></svg>
    </div>

    <div class="toolbar">
      <div class="nav-icons">
        <svg width="16" height="16" viewBox="0 0 16 16" fill="none" stroke="#f1f3f4" stroke-width="1.800"><path d="M15 8H2M8 1.500L1.500 8 8 14.500" /></svg>
        <svg width="16" height="16" viewBox="0 0 16 16" fill="none" stroke="#86888b" stroke-width="1.800"><path d="M1 8h13M8 1.500L14.500 8 8 14.500" /></svg>
        <svg width="16" height="16" viewBox="0 0 16 16" fill="none" stroke="#f1f3f4" stroke-width="1.900"><path d="M13.800 10A6.100 6.100 0 1 1 12.700 4.200" /><path d="M14.700.8v6.300H8.400l2.300-2.200 2-1.600z" fill="#f1f3f4" stroke="none" /></svg>
      </div>
      <div class="omnibox">
        <svg width="10" height="13" viewBox="0 0 10 13"><rect y="4.500" width="10" height="8" rx="1" fill="#9aa0a6" /><path d="M2.500 5V3a2.500 2.500 0 0 1 5 0v2" fill="none" stroke="#9aa0a6" stroke-width="1.400" /></svg>
        <span class="host" use:fit={244}>eu-north-1.console.aws.amazon.com</span><span class="path" use:fit={284}>/ecs/v2/task-definitions?region=eu-north-1</span>
        <svg class="share" width="12" height="15" viewBox="0 0 12 15" fill="none" stroke="#c4c7cb" stroke-width="1.400"><path d="M4 5H1v9h10V5H8M6 10V1.500M3.300 4L6 1.300 8.700 4" /></svg>
        <svg width="15" height="15" viewBox="0 0 15 15" fill="none" stroke="#c4c7cb" stroke-width="1.400"><path d="M7.500 1.500l1.800 4 4.400.5-3.300 2.900 1 4.300-3.900-2.300-3.900 2.300 1-4.300L1.300 6l4.400-.5z" /></svg>
      </div>
      <div class="tools">
        <svg width="16" height="16" viewBox="0 0 16 16"><path d="M1 4h3.800V3a1.900 1.900 0 0 1 3.800 0v1H13v4h.7a1.900 1.900 0 0 1 0 3.800H13V15.500H9V14a1.700 1.700 0 0 0-3.400 0v1.500H1v-4h1a1.700 1.700 0 0 0 0-3.500H1z" fill="#f1f3f4" /></svg>
        <svg width="16" height="16" viewBox="0 0 16 16"><path d="M2 14q-2-6 1.500-9.500T14 1.500q1.500 7-1.500 10.500T4 14.500" fill="none" stroke="#f1f3f4" stroke-width="1.600" /><path d="M8.800 3.500L5.500 8.500h2.200L7 12.500l3.800-5.300H8.300z" fill="#f1f3f4" /></svg>
        <svg width="16" height="16" viewBox="0 0 16 16" fill="none" stroke="#f1f3f4" stroke-width="1.900"><path d="M8 0v9.500M3.500 6L8 10.500 12.500 6M1 11v4h14v-4" /></svg>
        <svg width="14" height="14" viewBox="0 0 14 14"><path d="M1 1h12v12H1z" fill="none" stroke="#f1f3f4" stroke-width="2" /><path d="M8.500 1H13v12H8.500z" fill="#f1f3f4" /></svg>
        <svg class="avatar" width="22" height="22" viewBox="0 0 22 22"><clipPath id="av"><circle cx="11" cy="11" r="11" /></clipPath><g clip-path="url(#av)"><path d="M0 0h22v22H0z" fill="#40552f" /><path d="M12 0h10v9H12z" fill="#76a642" /><path d="M14 5l5-3 3 5-3 5-5-2z" fill="#dd1b84" /><path d="M13 13h9v9h-9z" fill="#a8a278" /><path d="M16 14h2v3h-2zM13 18h2v3h-2z" fill="#f2efe0" /><path d="M2 3q5-3 8 1l3 9-2 9H2z" fill="#4b2620" /><ellipse cx="7" cy="10" rx="2.800" ry="4.300" fill="#c07a5c" /><path d="M5 16l6-2 3 5-5 3H4z" fill="#7a3434" /></g></svg>
      </div>
      <div class="update"><span use:fit={45}>Update</span><i></i></div>
    </div>

    <div class="bookmarks">
      {#each bookmarks as b}<div class="bm">{@render fav(b[0])}<span use:fit={b[2]}>{b[1]}</span></div>{/each}
      <div class="bm-end"><span class="more">»</span><i></i>{@render fav('folder')}<span use:fit={80}>All Bookmarks</span></div>
    </div>

    <nav class="aws">
      <div class="logo">
        <b use:fit={29.5}>aws</b>
        <svg width="32" height="9" viewBox="0 0 32 9"><path d="M.8 1.500Q13 10.500 27.500 3.200" fill="none" stroke="#ff9900" stroke-width="1.900" /><path d="M25 1.600q4-1.600 5.700-.4.600 2.400-2 5.300" fill="none" stroke="#ff9900" stroke-width="1.400" /></svg>
      </div>
      <i class="vr"></i>
      <svg class="grid" width="16" height="16" viewBox="0 0 16 16" fill="#fff"><path d="M0 0h4v4H0zM6 0h4v4H6zM12 0h4v4h-4zM0 6h4v4H0zM6 6h4v4H6zM12 6h4v4h-4zM0 12h4v4H0zM6 12h4v4H6zM12 12h4v4h-4z" /></svg>
      <span class="services" use:fit={45}>Services</span>
      <div class="aws-search">
        <svg width="15" height="15" viewBox="0 0 15 15" fill="none" stroke="#d5dbdb" stroke-width="1.900"><circle cx="6" cy="6" r="4.700" /><path d="M9.500 9.500l4.800 4.800" /></svg>
        <em use:fit={41}>Search</em><span use:fit={70}>[Option+S]</span>
      </div>
      <div class="aws-right">
        <div class="cell" style:width="48px">{@render shell()}</div>
        <div class="cell" style:width="51px"><svg width="16" height="16" viewBox="0 0 16 16" fill="none" stroke="#fff" stroke-width="1.900"><path d="M1.300 11.500h13.400L11.800 8.300Q12 3 8 3T4.200 8.300zM8 0v3M5.800 12q.3 3.200 2.200 3.200t2.200-3.200" stroke-linejoin="round" /></svg></div>
        <div class="cell" style:width="50px"><svg width="17" height="17" viewBox="0 0 17 17" fill="none" stroke="#fff" stroke-width="1.900"><circle cx="8.500" cy="8.500" r="7.400" /><path d="M6 6.800q.2-2.300 2.500-2.300T11 6.600q0 1.200-1.300 1.900T8.500 10.200M8.500 11.500v1.700" stroke-width="1.700" /></svg></div>
        <div class="cell" style:width="50px">{@render gear()}</div>
        <div class="cell" style:width="110px"><span use:fit={59}>Stockholm</span><svg width="8" height="7" viewBox="0 0 8 7" fill="#fff"><path d="M0 0h8L4 7z" /></svg></div>
        <div class="cell last" style:width="113px"><span use:fit={62}>ramyaswati</span><svg width="8" height="7" viewBox="0 0 8 7" fill="#fff"><path d="M0 0h8L4 7z" /></svg></div>
      </div>
    </nav>

    <div class="body">
      <aside>
        <div class="exp">
          <div class="toggle"></div>
          <div class="exp-text"><span use:fit={128}>New ECS Experience</span><a href="#top" use:fit={119}>Tell us what you think</a></div>
          {@render close(14)}
        </div>
        <h2><span use:fit={128}>Amazon Elastic</span><span use:fit={149}>Container Service</span></h2>
        <div class="links">
          {#each sections as s, i}
            {#if i}<hr />{/if}
            {#each s as l}
              <div class="link" class:active={l.active}>
                <span use:fit={l.w}>{l.t}</span>
                {#if l.isNew}<b class="new"><span use:fit={25}>New</span></b>{/if}
                {#if l.ext}{@render ext()}{/if}
              </div>
            {/each}
          {/each}
        </div>
      </aside>

      <main>
        <section class="flash error">
          <svg class="st" width="16" height="16" viewBox="0 0 16 16" fill="none" stroke="#fff" stroke-width="1.900"><circle cx="8" cy="8" r="7" /><path d="M5.300 5.300l5.400 5.400M10.700 5.300l-5.400 5.400" /></svg>
          <div class="msg"><b use:fit={302}>There was an error creating cluster myCluster.</b>{#each errorLines as l}<span use:fit={l[1]}>{l[0]}</span>{/each}</div>
          <button class="btn cf"><span use:fit={164}>View in CloudFormation</span>{@render ext()}</button>
          <div class="dismiss">{@render close(14)}</div>
        </section>
        <section class="flash ok">
          <svg class="st" width="16" height="16" viewBox="0 0 16 16" fill="none" stroke="#fff" stroke-width="1.900"><circle cx="8" cy="8" r="7" /><path d="M4.700 8l2.500 2.400 4.200-4" /></svg>
          <div class="msg"><span use:fit={302}>Cluster mycluster has been created successfully.</span></div>
          <div class="dismiss">{@render close(14)}</div>
        </section>

        <div class="content">
          <div class="crumbs">
            <a href="#ecs" use:fit={211}>Amazon Elastic Container Service</a>
            <svg width="9" height="14" viewBox="0 0 9 14"><path d="M1 .7L7.500 7 1 13.300" fill="none" stroke="#687078" stroke-width="1.900" /></svg>
            <b use:fit={104}>Task definitions</b>
          </div>

          <div class="card">
            <div class="card-head">
              <div class="title-row">
                <h1 use:fit={134}>Task definitions</h1><span class="count" use:fit={21}>(0)</span><b class="info" use:fit={23}>Info</b>
                <button class="btn refresh" aria-label="Refresh"><svg width="16" height="16" viewBox="0 0 16 16" fill="none" stroke="currentColor" stroke-width="1.900"><path d="M15 9.500A7 7 0 1 1 13.500 3.600M10 5h5V0" /></svg></button>
                <button class="btn off deploy"><span use:fit={48}>Deploy</span>{@render caret()}</button>
                <button class="btn off revision"><span use:fit={134}>Create new revision</span>{@render caret()}</button>
                <button class="btn primary"><span use:fit={180}>Create new task definition</span>{@render caret()}</button>
              </div>
              <div class="filter-row">
                <div class="filter"><svg width="15" height="15" viewBox="0 0 15 15" fill="none" stroke="#687078" stroke-width="1.900"><circle cx="6" cy="6" r="4.900" /><path d="M9.500 9.500l4.800 4.800" /></svg><em use:fit={258}>Filter task definitions by property or value</em></div>
                <span class="matches" use:fit={75}>No matches</span>
              </div>
              <div class="token-row">
                <div class="token"><div class="token-text"><span use:fit={198}>Status of last revision = ACTIVE</span></div><div class="token-x">{@render close(14)}</div></div>
                <i class="sep"></i>
                <button class="btn"><span use:fit={80}>Clear filters</span></button>
                <div class="pager">
                  <svg width="9" height="15" viewBox="0 0 9 15"><path d="M8 .7L1.200 7.500 8 14.300" fill="none" stroke="#aab7b8" stroke-width="1.800" /></svg>
                  <b>1</b>
                  <svg width="9" height="15" viewBox="0 0 9 15"><path d="M1 .7l6.800 6.800L1 14.300" fill="none" stroke="#aab7b8" stroke-width="1.800" /></svg>
                  <i></i>
                  {@render gear()}
                </div>
              </div>
            </div>
            <div class="thead">
              <div class="sel"></div>
              <div class="th first"><b use:fit={98}>Task definition</b><svg width="10" height="8" viewBox="0 0 10 8"><path d="M1.600 1h6.800L5 6.500z" fill="none" stroke="#687078" stroke-width="1.700" /></svg></div>
              <div class="th"><b use:fit={142}>Status of last revision</b><svg width="10" height="8" viewBox="0 0 10 8"><path d="M1.600 1h6.800L5 6.500z" fill="none" stroke="#687078" stroke-width="1.700" /></svg></div>
            </div>
            <div class="empty">
              <b use:fit={124}>No task definitions</b>
              <span use:fit={187}>No task definitions to display.</span>
              <button class="btn"><span use:fit={180}>Create new task definition</span></button>
            </div>
          </div>
        </div>
      </main>

      <div class="help"><svg width="16" height="16" viewBox="0 0 16 16" fill="none" stroke="#545b64" stroke-width="1.900"><circle cx="8" cy="8" r="7" /><path d="M8 3.800v1.700M6.300 7.300H8v4.200M6 11.500h4" stroke-width="1.600" /></svg></div>
    </div>

    <footer>
      {@render shell()}
      <span use:fit={59}>CloudShell</span>
      <span class="fb" use:fit={51}>Feedback</span>
      <span class="copy" use:fit={274}>© 2023, Amazon Web Services, Inc. or its affiliates.</span>
      <span use:fit={39}>Privacy</span>
      <span use:fit={33}>Terms</span>
      <span use:fit={103}>Cookie preferences</span>
    </footer>
  </div>

  <div class="paper"><span class="board" use:fit={113}>Kanban board</span><span class="dates" use:fit={374}>06/10/2017 – 06/20/2018 Bangalore, India</span></div>

  <div class="dock">
    {#each dock as d}
      {#if d[0] === 'sep'}<i class="dsep"></i>
      {:else}<div class="dapp">{@render app(d[0])}{#if d[1]}<i class="run"></i>{/if}</div>{/if}
    {/each}
  </div>
</div>

<style>
  :global(body) { margin: 0; overflow: hidden; }
  .desktop {
    position: relative; width: 1440px; height: 900px; overflow: hidden; display: flex; flex-direction: column;
    font-family: Inter, "Noto Sans", sans-serif; background: #050304;
  }
  .desktop span, .desktop b, .desktop em, .desktop a, h1 { white-space: nowrap; display: inline-block; flex: none; }
  svg { flex: none; display: block; }
  i { flex: none; }

  .menubar {
    height: 25px; box-sizing: border-box; display: flex; align-items: center; gap: 20.550px; padding-left: 21px;
    font-size: 13px; font-weight: 500; color: #eef0f6; border-bottom: 1px solid #05050a;
    background: linear-gradient(90deg, #1a406e 0, #1e3468 280px, #20205c 520px, #21144e 760px);
  }
  .apple { margin: -2px 1px 0 0; }
  .status { margin-left: auto; display: flex; align-items: center; padding-right: 18px; }
  .status svg:nth-child(1) { margin-right: 19px; }
  .status svg:nth-child(2) { margin-right: 20px; }
  .status svg:nth-child(3) { margin-right: 18px; }
  .status svg:nth-child(4) { margin-right: 17.500px; }
  .status svg:nth-child(5) { margin-right: 18px; }
  .status svg:nth-child(6) { margin-right: 18px; }
  .status svg:nth-child(7) { margin-right: 17px; }
  .status svg:nth-child(8) { margin-right: 16px; }
  .clock { margin-top: -1px; }

  .window {
    position: relative; height: 817px; flex: none; border-radius: 10px; overflow: hidden; background: #35363a;
    display: flex; flex-direction: column; z-index: 2;
  }
  .window::after { content: ""; position: absolute; inset: 0; border-radius: 10px; box-shadow: inset 0 0 0 1px rgba(255, 255, 255, .24); pointer-events: none; }

  .tabs { height: 42px; background: #202124; display: flex; align-items: center; flex: none; }
  .lights { display: flex; gap: 8px; width: 72px; padding-left: 21px; }
  .lights i { width: 12px; height: 12px; border-radius: 50%; background: #ff5044; }
  .lights i:nth-child(2) { background: #fdbc02; }
  .lights i:nth-child(3) { background: #04cb2e; }
  .tab { width: 44px; height: 20px; margin-top: 7px; box-sizing: border-box; padding-left: 7px; display: flex; align-items: center; border-right: 1px solid #606266; flex: none; }
  .tab:nth-of-type(19) { border-right-color: transparent; }
  .tab-label { margin-left: 8px; width: 5.500px; overflow: hidden; font-size: 11.500px; line-height: 16px; color: #e8eaed; -webkit-mask-image: linear-gradient(90deg, #000 50%, rgba(0, 0, 0, .35)); mask-image: linear-gradient(90deg, #000 50%, rgba(0, 0, 0, .35)); }
  .active-tab { width: 45px; margin-left: -1px; height: 34px; align-self: flex-end; background: #35363a; border-radius: 8px 8px 0 0; display: flex; align-items: center; flex: none; position: relative; }
  .active-tab::before, .active-tab::after { content: ""; position: absolute; bottom: 0; width: 8px; height: 8px; }
  .active-tab::before { left: -8px; background: radial-gradient(circle at 0 0, transparent 7.500px, #35363a 8px); }
  .active-tab::after { right: -8px; background: radial-gradient(circle at 100% 0, transparent 7.500px, #35363a 8px); }
  .active-tab svg { margin-left: 11.500px; }
  .late .tab { width: 43px; }
  .late .tab:first-child, .late .tab:nth-child(2) { width: 43.800px; }
  .plus { margin: 7px 0 0 16px; }
  .chev { margin: 7px 17px 0 auto; }

  .toolbar { height: 38px; padding-top: 4px; box-sizing: border-box; display: flex; align-items: center; flex: none; }
  .nav-icons { width: 94px; padding-left: 14px; display: flex; gap: 16px; }
  .omnibox { width: 1068px; height: 34px; border-radius: 17px; background: #202124; display: flex; align-items: center; box-sizing: border-box; padding: 0 10px 0 13px; font-size: 14px; }
  .host { color: #fff; margin: -2px 0 0 11px; }
  .path { color: #9aa0a6; margin-top: -2px; }
  .share { margin: 0 19px 0 auto; }
  .tools { display: flex; align-items: center; gap: 16px; padding-left: 14px; }
  .tools svg:nth-child(4) { margin-left: 1px; }
  .avatar { margin-left: -2px; }
  .update { margin-left: 7px; width: 88px; height: 28px; box-sizing: border-box; border: 1px solid #f28b82; border-radius: 14px; background: #45393c; color: #f6aea9; font-size: 13.500px; display: flex; align-items: center; padding-left: 12px; }
  .update i { width: 3px; height: 3px; border-radius: 50%; background: #f28b82; box-shadow: 0 -5px #f28b82, 0 5px #f28b82; margin-left: 14px; }

  .bookmarks { height: 37px; box-sizing: border-box; border-bottom: 1px solid #5d5e61; display: flex; align-items: center; padding: 0 15px 1px 14px; gap: 17px; color: #f1f3f4; font-size: 12px; font-weight: 500; flex: none; }
  .bm, .bm-end { display: flex; align-items: center; gap: 8px; }
  .bm-end { margin-left: auto; }
  .more { font-size: 15px; line-height: 12px; }
  .bm-end i { width: 1px; height: 16px; background: #606266; margin: 0 1px; }

  .aws, .body, footer { font-family: "Noto Sans", "Open Sans", sans-serif; }
  .aws { height: 41px; box-sizing: border-box; border-bottom: 1px solid #525c69; background: #232f3e; color: #fff; display: flex; align-items: center; flex: none; }
  .logo { width: 48px; padding-left: 18px; height: 26px; }
  .desktop .logo b { font-size: 18px; line-height: 16px; font-weight: 500; height: 16px; display: block; width: 30px; }
  .logo svg { margin-top: 0; }
  .vr { width: 1px; height: 22px; background: #414d5c; }
  .grid { margin-left: 17px; }
  .services { margin-left: 8px; font-size: 12px; font-weight: 600; }
  .aws-search { width: 540px; height: 31px; margin-left: 17px; box-sizing: border-box; border: 1px solid #879596; border-radius: 2px; background: #161922; display: flex; align-items: center; padding: 0 10px 0 10.500px; font-size: 14px; color: #95a5a6; }
  .aws-search em { margin-left: 9.500px; }
  .aws-search span { margin-left: auto; }
  .aws-right { margin-left: auto; display: flex; align-items: center; }
  .cell { height: 22px; box-sizing: border-box; border-right: 1px solid #414d5c; display: flex; align-items: center; justify-content: center; font-size: 12px; font-weight: 600; gap: 6px; }
  .cell.last { border: 0; justify-content: flex-start; padding-left: 17px; gap: 7px; }

  .body { height: 628px; display: flex; flex: none; background: #fff; font-size: 14px; color: #16191f; overflow: hidden; }
  aside { width: 280px; box-sizing: border-box; flex: none; }
  .exp { height: 69px; box-sizing: border-box; border-bottom: 1px solid #eaeded; display: flex; padding: 12px 22px 0 24px; color: #545b64; }
  .toggle { width: 24px; height: 16px; border-radius: 8px; background: #0073bb; margin-top: 3px; flex: none; }
  .toggle::after { content: ""; display: block; width: 12px; height: 12px; border-radius: 50%; background: #fff; transform: translate(10px, 2px); }
  .exp-text { margin-left: 8px; display: flex; flex-direction: column; align-items: flex-start; flex: 1; }
  .exp-text span { color: #16191f; line-height: 22px; }
  .exp-text a { color: #0073bb; font-size: 12px; line-height: 22px; text-decoration: none; margin-top: 2px; }
  .exp svg { margin-top: 12px; }
  h2 { margin: 0; height: 85px; box-sizing: border-box; border-bottom: 1px solid #eaeded; padding: 20px 0 0 32px; font-size: 17.500px; line-height: 22px; display: flex; flex-direction: column; align-items: flex-start; font-weight: 700; }
  .links { padding: 16px 20px 0; }
  hr { border: 0; height: 1px; background: #eaeded; margin: 20px 0; }
  .link { height: 30px; display: flex; align-items: center; padding-left: 12px; color: #545b64; }
  .link > span { margin-top: -2px; }
  .link.active { color: #0073bb; font-weight: 700; }
  .new { margin-left: 8px; font-size: 11.500px; color: #0073bb; line-height: 15px; border-bottom: 1px dashed #0073bb; margin-top: 3px; }
  .new span { transform: translateY(-1px); }
  .ext { margin-left: 5px; }

  main { width: 1120px; box-sizing: border-box; flex: none; display: flex; flex-direction: column; background: #f2f3f3; }
  .flash { color: #fff; display: flex; align-items: flex-start; box-sizing: border-box; flex: none; padding-left: 12px; }
  .error { height: 137px; background: #e00b00; padding-top: 8px; border-bottom: 1px solid #b08a88; }
  .ok { height: 49px; background: #008a00; padding-top: 8px; margin-top: 1px; border-bottom: 1px solid #7f9a80; }
  .st { margin-top: 8px; }
  .msg { margin-left: 8px; margin-top: 5px; width: 808px; display: flex; flex-direction: column; align-items: flex-start; line-height: 22px; font-weight: 500; }
  .ok .msg { width: 1052px; }
  .dismiss { margin: 9px 0 0 18px; opacity: .85; }
  .ok .dismiss { margin-left: 0; }
  .btn { font: 700 14px "Noto Sans", "Open Sans", sans-serif; height: 32px; box-sizing: border-box; border: 1px solid #545b64; border-radius: 2px; background: #fff; color: #545b64; padding: 0 20px; display: flex; align-items: center; justify-content: center; flex: none; }
  .btn span { margin-top: -2px; }
  .btn svg:not(:first-child) { margin-left: 11px; }
  .cf { width: 226px; padding: 0 16px 0 19px; justify-content: flex-start; }
  .btn.cf span { margin-top: 0; }
  .btn.cf :global(.ext:not(:first-child)) { margin-left: 10px; }
  .content { flex: 1; border-left: 1px solid #d0d3d4; border-right: 1px solid #d0d3d4; padding: 19px 38px 0 39px; }
  .crumbs { display: flex; align-items: center; height: 22px; }
  .crumbs a { color: #0073bb; text-decoration: underline; text-underline-offset: 2px; margin-top: -1px; }
  .crumbs svg { margin: 0 12px 0 11px; }
  .crumbs b { color: #687078; margin-top: -1px; }
  .card { width: 1040px; height: 320px; margin-top: 16px; background: #fff; box-sizing: border-box; box-shadow: 0 0 0 1px #dfe2e3, 0 1px 1px 0 #6b7275, 1px 1px 1px rgba(0, 28, 36, .3); display: flex; flex-direction: column; }
  .card-head { height: 157px; box-sizing: border-box; background: #fafafa; padding: 16px 20px 0; display: flex; flex-direction: column; border-bottom: 1px solid #eaeded; }
  .title-row { display: flex; height: 32px; align-items: center; gap: 8px; }
  h1 { font-size: 17.500px; margin: -2px 0 0; font-weight: 700; }
  .count { font-size: 18px; color: #687078; margin: -2px 0 0 -3px; }
  .info { font-size: 11.500px; color: #0073bb; margin-top: 3px; }
  .refresh { margin-left: auto; width: 50px; padding: 0; }
  .off { color: #aab7b8; border-color: #d5dbdb; }
  .deploy { width: 110px; padding: 0; }
  .revision { width: 196px; padding: 0; }
  .primary { width: 242px; padding: 0; background: #fb6b00; border-color: #fb6b00; color: #16191f; }
  .filter-row { display: flex; align-items: center; margin-top: 12px; gap: 12px; }
  .filter { width: 561px; height: 32px; box-sizing: border-box; border: 1px solid #687078; border-radius: 2px; background: #fff; display: flex; align-items: center; padding-left: 7.500px; color: #687078; }
  .filter em { margin-left: 9.500px; }
  .matches { margin-top: -1px; }
  .token-row { display: flex; align-items: center; margin-top: 8px; height: 32px; }
  .token { display: flex; width: 246px; height: 32px; box-sizing: border-box; border: 1px solid #0073bb; border-radius: 2px; background: #f1faff; }
  .token-text { width: 215px; box-sizing: border-box; border-right: 1px solid #0073bb; padding: 5px 0 0 8px; }
  .token-text span { line-height: 20px; border-bottom: 1px dashed #16191f; height: 18px; }
  .token-x { flex: 1; display: flex; align-items: center; justify-content: center; color: #545b64; }
  .sep { width: 1px; height: 32px; background: #e3e6e6; margin: 0 24px; }
  .pager { margin-left: auto; margin-top: 16px; height: 32px; display: flex; align-items: center; color: #545b64; padding-right: 5px; }
  .pager b { margin: -1px 19px 0; color: #16191f; font-size: 13px; width: 8px; text-align: center; }
  .pager i { width: 1px; height: 32px; background: #e3e6e6; margin: 0 13px 0 14px; }
  .thead { height: 40px; box-sizing: border-box; background: #fafafa; border-bottom: 1px solid #eaeded; display: flex; align-items: center; color: #545b64; }
  .thead b { margin-top: -2px; }
  .sel { width: 54px; height: 20px; box-sizing: border-box; border-right: 1px solid #eaeded; }
  .th { flex: 1; height: 20px; box-sizing: border-box; display: flex; align-items: center; justify-content: space-between; padding: 0 15px 0 20px; }
  .th.first { flex: none; width: 493px; border-right: 1px solid #687078; padding-right: 14px; }
  .empty { display: flex; flex-direction: column; align-items: center; color: #545b64; padding-top: 15px; line-height: 22px; }
  .empty > span { margin-top: 4px; }
  .empty .btn { margin-top: 8px; }
  .help { flex: 1; display: flex; justify-content: center; padding-top: 12px; }

  footer { height: 31px; background: #232f3e; color: #fff; font-size: 12px; font-weight: 600; display: flex; align-items: center; padding: 1px 16px 0; box-sizing: border-box; }
  footer span { margin-left: 5px; }
  footer .fb { margin-left: 25px; }
  footer .copy { margin-left: auto; }
  footer .copy + span { margin-left: 30.500px; }
  footer .copy ~ span:last-child, footer .copy + span + span { margin-left: 25px; }

  .paper {
    position: absolute; left: 0; top: 842px; width: 1440px; height: 58px; overflow: hidden;
    background:
      linear-gradient(90deg, #40030e 0, rgba(48, 3, 12, .9) 30px, transparent 54px) 0 13px no-repeat,
      linear-gradient(#050304 0 14px, transparent 52px) 0 0 / 1405px 58px no-repeat,
      radial-gradient(ellipse 75px 62px at 1395px 0, #050304 30%, transparent),
      linear-gradient(90deg, #2e030c 0 54px, #35292e 54px 87px, #d6d3d4 87px 107px, #30272b 107px 147px, #8a8688 147px 162px, #d9d7d8 162px 248px, #332a2e 248px 282px, #e2e1e1 282px 303px, #6b76a5 303px 304px, #e2e1e1 304px 514px, #42383c 514px 548px, #8f8c8d 548px 562px, #e4e3e3 562px 658px, #2d3f80 658px 660px, #e8e7e7 660px);
  }
  .dates { position: absolute; left: 690px; top: 54px; font: 700 17px "Liberation Sans", Arial, sans-serif; color: #26397a; }
  .board { position: absolute; left: 1137px; top: 7px; font: 500 18px Inter, sans-serif; color: #242122; }

  .dock {
    position: absolute; z-index: 3; left: 22px; top: 855px; width: 1397px; height: 41px; box-sizing: border-box; padding-left: 1.800px;
    border: 1px solid rgba(190, 180, 184, .35); border-radius: 10px; display: flex; align-items: center;
    background: linear-gradient(90deg, #43353a 0, #554b4f 120px, #706a6c 220px, #6f696b 440px, #5c5357 530px, #706a6c 620px, #7c7779 900px, #858182 1390px);
  }
  .dapp { width: 30.960px; height: 39px; display: flex; align-items: center; justify-content: center; position: relative; flex: none; padding-bottom: 3px; box-sizing: border-box; }
  .run { position: absolute; left: 14px; bottom: 2px; width: 3px; height: 3px; border-radius: 50%; background: #dcd9da; }
  .dsep { width: 1px; height: 30px; background: #a6a2a4; margin: 0 6.300px; }
  .badge { position: absolute; top: 4px; right: 1px; min-width: 10px; height: 10px; border-radius: 5px; background: #f5202c; color: #fff; font-size: 6px; line-height: 10px; text-align: center; font-weight: 500; }
  .badge.wide { width: 20px; right: 0; }
</style>
